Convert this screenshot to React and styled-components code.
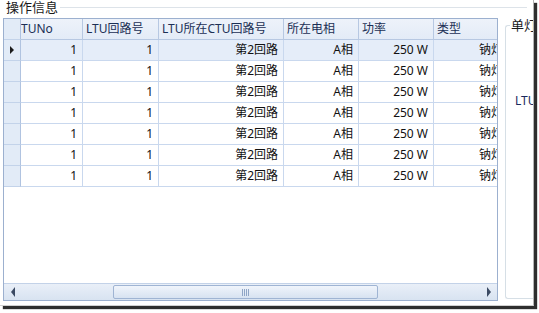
import React from "react";
import styled, { createGlobalStyle } from "styled-components";

const Global = createGlobalStyle`
  html, body { margin: 0; padding: 0; background: #ffffff; }
  body { font-family: "Noto Sans", "Noto Sans CJK SC", sans-serif; }
`;

const Page = styled.div`
  width: 539px;
  height: 313px;
  background: #fff;
  overflow: hidden;
`;

const Window = styled.div`
  width: 533px;
  height: 305px;
  background: #fff;
  border-right: 1px solid #b4b4b4;
  border-bottom: 1px solid #d0d0d0;
  box-shadow: 3px 3px 1px #2e2e2e;
  display: flex;
  flex-direction: column;
  overflow: hidden;
`;

const GroupHeader = styled.div`
  height: 15px;
  display: flex;
  align-items: center;
`;

const GroupTitle = styled.span`
  font-size: 13px;
  line-height: 15px;
  color: #1a1a1a;
  padding-left: 6px;
  padding-right: 2px;
  white-space: nowrap;
`;

const GroupLine = styled.div`
  flex: 1;
  height: 0;
  border-top: 1px solid #dde3e9;
  margin-right: 6px;
`;

const Body = styled.div`
  flex: 1;
  display: flex;
  padding-left: 3px;
  margin-top: 3px;
`;

const Grid = styled.div`
  width: 495px;
  height: 283px;
  box-sizing: border-box;
  border: 1px solid #9cb0cf;
  display: flex;
  flex-direction: column;
  overflow: hidden;
  flex-shrink: 0;
`;

const Row = styled.div`
  display: flex;
  height: 21px;
  flex-shrink: 0;
  background: ${(p) => (p.$selected ? "#e5edf9" : "#ffffff")};
`;

const HeaderRow = styled(Row)`
  background: linear-gradient(#edf2fa, #e3ebf7);
`;

const Cell = styled.div`
  width: ${(p) => p.$w}px;
  flex-shrink: 0;
  box-sizing: border-box;
  border-right: 1px solid #c9d8ee;
  border-bottom: 1px solid #c9d8ee;
  font-size: 12px;
  line-height: 20px;
  color: #111;
  text-align: ${(p) => (p.$align === "left" ? "left" : "right")};
  padding: ${(p) => (p.$align === "left" ? "0 2px 0 3px" : "0 5px 0 2px")};
  white-space: nowrap;
  overflow: hidden;
`;

const HeadCell = styled(Cell)`
  color: #1b2f55;
  border-right-color: #b7c8e2;
  border-bottom-color: #b7c8e2;
  padding: 0 2px 0 3px;
  text-indent: ${(p) => (p.$tight ? "-3px" : "0")};
`;

const RowHead = styled.div`
  width: 17px;
  flex-shrink: 0;
  box-sizing: border-box;
  background: #e2ebf7;
  border-right: 1px solid #b0c3e0;
  border-bottom: 1px solid #c3d3ea;
  display: flex;
  align-items: center;
  justify-content: center;
`;

const Arrow = styled.span`
  width: 0;
  height: 0;
  border-top: 4px solid transparent;
  border-bottom: 4px solid transparent;
  border-${(p) => (p.$dir === "left" ? "right" : "left")}: 4px solid #1c1c1c;
`;

const Empty = styled.div`
  flex: 1;
  background: #fff;
`;

const HScroll = styled.div`
  height: 17px;
  flex-shrink: 0;
  display: flex;
  align-items: center;
  background: linear-gradient(#e9eff8, #d8e3f1);
  border-top: 1px solid #c3d2e8;
  box-sizing: border-box;
`;

const ScrollBtn = styled.div`
  width: 17px;
  height: 100%;
  display: flex;
  align-items: center;
  justify-content: center;
  flex-shrink: 0;
`;

const ScrollArrow = styled(Arrow)`
  border-top-width: 5px;
  border-bottom-width: 5px;
  border-${(p) => (p.$dir === "left" ? "right" : "left")}-color: #3b4a63;
`;

const Track = styled.div`
  flex: 1;
  height: 100%;
  display: flex;
  align-items: center;
  padding-left: 92px;
  box-sizing: border-box;
`;

const Thumb = styled.div`
  width: 265px;
  height: 14px;
  box-sizing: border-box;
  border: 1px solid #9fb4d3;
  border-radius: 2px;
  background: linear-gradient(#f0f4fb, #d7e2f1);
  display: flex;
  align-items: center;
  justify-content: center;
  gap: 1px;
`;

const Grip = styled.span`
  width: 1px;
  height: 7px;
  background: #8fa5c6;
`;

const RightGroup = styled.div`
  margin-left: 7px;
  margin-top: 7px;
  height: 274px;
  flex: 1;
  box-sizing: border-box;
  border: 1px solid #d6dfe6;
  border-right: none;
  border-radius: 3px 0 0 3px;
  position: relative;
  padding-left: 9px;
  padding-top: 67px;
`;

const RightTitle = styled.span`
  position: absolute;
  top: -8px;
  left: 4px;
  background: #fff;
  padding: 0 1px;
  font-size: 13px;
  line-height: 15px;
  color: #1a1a1a;
  white-space: nowrap;
`;

const FieldLabel = styled.div`
  font-size: 12px;
  line-height: 15px;
  color: #1a2a5c;
  white-space: nowrap;
  overflow: hidden;
`;

const cols = [
  { key: "no", title: "TUNo", w: 62, tight: true },
  { key: "ltu", title: "LTU回路号", w: 76 },
  { key: "ctu", title: "LTU所在CTU回路号", w: 125 },
  { key: "phase", title: "所在电相", w: 75 },
  { key: "power", title: "功率", w: 75 },
  { key: "type", title: "类型", w: 75 },
];

const row = { no: "1", ltu: "1", ctu: "第2回路", phase: "A相", power: "250 W", type: "钠灯" };
const rows = Array.from({ length: 7 }, () => row);

export default function App() {
  return (
    <>
      <Global />
      <Page>
        <Window>
          <GroupHeader>
            <GroupTitle>操作信息</GroupTitle>
            <GroupLine />
          </GroupHeader>
          <Body>
            <Grid>
              <HeaderRow>
                <RowHead />
                {cols.map((c) => (
                  <HeadCell key={c.key} $w={c.w} $align="left" $tight={c.tight}>
                    {c.title}
                  </HeadCell>
                ))}
              </HeaderRow>
              {rows.map((r, i) => (
                <Row key={i} $selected={i === 0}>
                  <RowHead>{i === 0 && <Arrow $dir="right" />}</RowHead>
                  {cols.map((c) => (
                    <Cell key={c.key} $w={c.w}>
                      {r[c.key]}
                    </Cell>
                  ))}
                </Row>
              ))}
              <Empty />
              <HScroll>
                <ScrollBtn>
                  <ScrollArrow $dir="left" />
                </ScrollBtn>
                <Track>
                  <Thumb>
                    <Grip />
                    <Grip />
                    <Grip />
                    <Grip />
                  </Thumb>
                </Track>
                <ScrollBtn>
                  <ScrollArrow $dir="right" />
                </ScrollBtn>
              </HScroll>
            </Grid>
            <RightGroup>
              <RightTitle>单灯</RightTitle>
              <FieldLabel>LTU</FieldLabel>
            </RightGroup>
          </Body>
        </Window>
      </Page>
    </>
  );
}
